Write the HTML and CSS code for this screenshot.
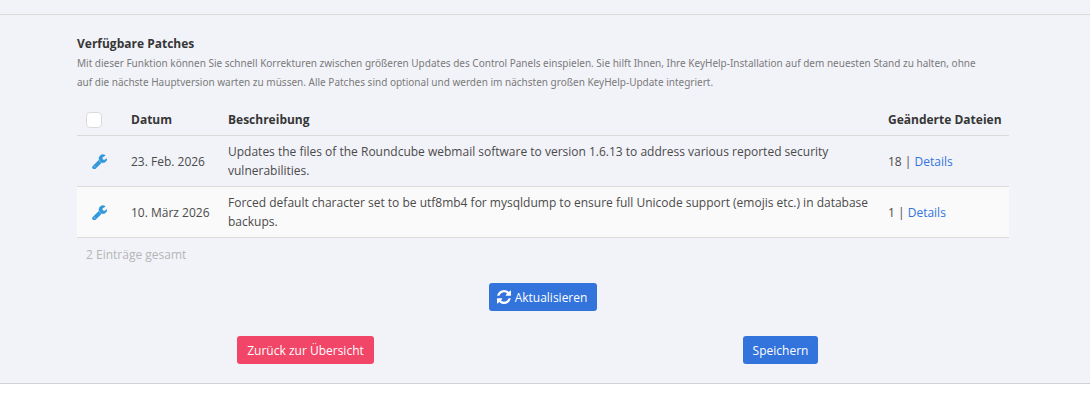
FILE: index.html
```
<!DOCTYPE html>
<html lang="de">
<head>
  <meta charset="UTF-8">
  <meta name="viewport" content="width=device-width, initial-scale=1">
  <title>Verfügbare Patches</title>
  <link rel="stylesheet" href="styles.css">
</head>
<body>
  <!-- shared icon shapes -->
  <svg class="sprite" aria-hidden="true">
    <symbol id="wrench" viewBox="64 64 1664 1664">
      <path d="M448 1472q0-26-19-45t-45-19-45 19-19 45 19 45 45 19 45-19 19-45zm644-420l-682 682q-37 37-90 37-52 0-91-37l-106-108q-38-36-38-90 0-53 38-91l681-681q39 98 114.500 173.500t173.500 114.500zm634-435q0 39-23 106-47 134-164.500 217.500t-258.500 83.500q-185 0-316.500-131.500t-131.500-316.500 131.500-316.500 316.500-131.500q58 0 121.500 16.500t107.500 46.500q16 11 16 28t-16 28l-293 169v224l193 107q5-3 79-48.500t135.500-81 70.500-35.500q15 0 23.500 10t8.500 25z"/>
    </symbol>
    <symbol id="sync" viewBox="128 128 1536 1536">
      <path d="M1639 1056q0 5-1 7-64 268-268 434.500t-478 166.500q-146 0-282.500-55t-243.500-157l-129 129q-19 19-45 19t-45-19-19-45v-448q0-26 19-45t45-19h448q26 0 45 19t19 45-19 45l-137 137q71 66 161 102t187 36q134 0 250-65t186-179q11-17 53-117 8-23 30-23h192q13 0 22.500 9.500t9.500 22.500zm25-800v448q0 26-19 45t-45 19h-448q-26 0-45-19t-19-45 19-45l138-138q-148-137-349-137-134 0-250 65t-186 179q-11 17-53 117-8 23-30 23h-199q-13 0-22.500-9.500t-9.500-22.500v-7q65-268 270-434.500t480-166.500q146 0 284 55.500t245 156.500l130-129q19-19 45-19t45 19 19 45z"/>
    </symbol>
  </svg>

  <main class="panel">
    <section class="content">
      <h2 class="label">Verfügbare Patches</h2>
      <p class="help">Mit dieser Funktion können Sie schnell Korrekturen zwischen größeren Updates des Control Panels einspielen. Sie hilft Ihnen, Ihre KeyHelp-Installation auf dem neuesten Stand zu halten, ohne auf die nächste Hauptversion warten zu müssen. Alle Patches sind optional und werden im nächsten großen KeyHelp-Update integriert.</p>

      <table class="table">
        <thead>
          <tr>
            <th class="col-check"><input type="checkbox" class="checkbox" aria-label="Alle auswählen"></th>
            <th class="col-date">Datum</th>
            <th>Beschreibung</th>
            <th class="col-files">Geänderte Dateien</th>
          </tr>
        </thead>
        <tbody>
          <tr>
            <td class="col-icon"><svg class="icon-wrench"><use href="#wrench"/></svg></td>
            <td>23. Feb. 2026</td>
            <td>Updates the files of the Roundcube webmail software to version 1.6.13 to address various reported security vulnerabilities.</td>
            <td>18 | <a href="#">Details</a></td>
          </tr>
          <tr>
            <td class="col-icon"><svg class="icon-wrench"><use href="#wrench"/></svg></td>
            <td>10. März 2026</td>
            <td>Forced default character set to be utf8mb4 for mysqldump to ensure full Unicode support (emojis etc.) in database backups.</td>
            <td>1 | <a href="#">Details</a></td>
          </tr>
        </tbody>
      </table>
      <p class="total">2 Einträge gesamt</p>

      <div class="refresh">
        <button type="button" class="button is-link has-icon"><svg class="icon-sync"><use href="#sync"/></svg>Aktualisieren</button>
      </div>
      <div class="actions">
        <div class="column"><button type="button" class="button is-danger">Zurück zur Übersicht</button></div>
        <div class="column"><button type="submit" class="button is-link">Speichern</button></div>
      </div>
    </section>
  </main>
</body>
</html>
```

FILE: styles.css
```
:root {
  --panel-bg: #f2f3f9;
  --border: #dbdbdb;
  --text: #4a4a4a;
  --strong: #363636;
  --link: #3273dc;
  --danger: #f14668;
}
* { box-sizing: border-box; }
body { margin: 0; background: #fff; color: var(--text); font-family: "Open Sans", "Noto Sans", sans-serif; font-size: 12px; line-height: 19px; }
.sprite { position: absolute; width: 0; height: 0; }
a { color: var(--link); text-decoration: none; }

.panel { padding-top: 14px; background: var(--panel-bg); border-bottom: 1px solid #d0d1d7; box-shadow: 0 2px 3px rgba(10,10,10,0.1); }
.content { padding: 19px 81px 19px 77px; border-top: 1px solid var(--border); }
.label { margin: 0; color: var(--strong); font-size: 12px; font-weight: 700; }
.help { margin: 1px 0 0; padding-right: 20px; color: #7a7a7a; font-family: "Noto Sans", sans-serif; font-size: 10px; }

.table { width: 100%; margin-top: 12px; border-collapse: collapse; table-layout: fixed; }
.table th, .table td { padding: 6px 9px; border-bottom: 1px solid var(--border); text-align: left; vertical-align: middle; }
.table th { color: var(--strong); font-weight: 700; white-space: nowrap; }
.table tbody tr:nth-child(even) { background: #fafafa; }
.col-check { width: 45px; }
.col-date { width: 97px; }
.col-files { width: 130px; }
.table .col-icon { padding-left: 15px; }
.checkbox { display: block; width: 16px; height: 16px; margin: 0; appearance: none; background: #fff; border: 1px solid var(--border); border-radius: 4px; }
.icon-wrench { display: block; width: 15px; height: 15px; fill: #3298dc; stroke: #3298dc; stroke-width: 50px; }
.total { margin: 7px 9px 0; color: #b5b5b5; }

.button { height: 28px; padding: 0 10px; border: 0; border-radius: 3px; color: #fff; font: inherit; cursor: pointer; }
.is-link { background: var(--link); }
.is-danger { background: var(--danger); }
.has-icon { display: inline-flex; align-items: center; gap: 4px; padding-left: 8px; }
.icon-sync { width: 14px; height: 14px; fill: currentColor; }
.refresh { display: flex; justify-content: center; margin-top: 19px; }
.actions { display: flex; margin: 25px -9px 0; }
.column { flex: 1; display: flex; justify-content: center; }
```
